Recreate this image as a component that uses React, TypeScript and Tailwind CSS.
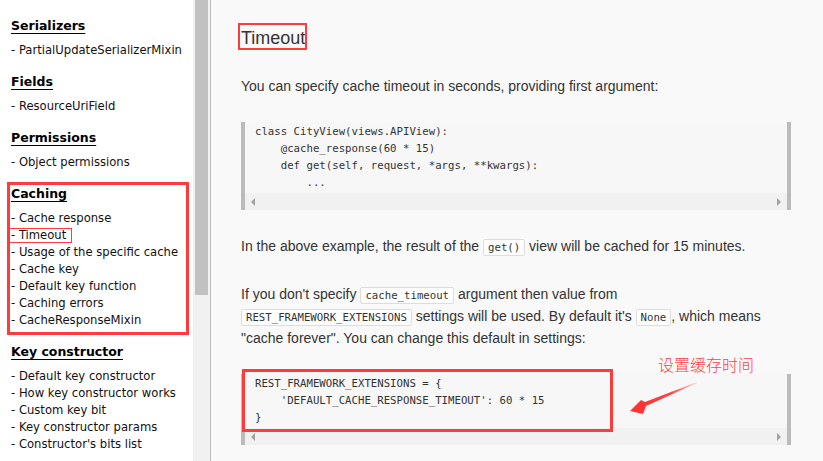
import React from 'react';

const sections: { title: string; items: string[] }[] = [
  { title: 'Serializers', items: ['PartialUpdateSerializerMixin'] },
  { title: 'Fields', items: ['ResourceUriField'] },
  { title: 'Permissions', items: ['Object permissions'] },
  {
    title: 'Caching',
    items: [
      'Cache response',
      'Timeout',
      'Usage of the specific cache',
      'Cache key',
      'Default key function',
      'Caching errors',
      'CacheResponseMixin',
    ],
  },
  {
    title: 'Key constructor',
    items: [
      'Default key constructor',
      'How key constructor works',
      'Custom key bit',
      'Key constructor params',
      "Constructor's bits list",
    ],
  },
];

const sideFont = { fontFamily: '"DejaVu Sans", Verdana, sans-serif' };
const bodyFont = { fontFamily: '"Liberation Sans", Arial, sans-serif' };
const monoFont = { fontFamily: '"DejaVu Sans Mono", "Liberation Mono", monospace' };

function Sidebar() {
  return (
    <div className="relative w-[193px] shrink-0 bg-white pt-[16px] pl-[11px] text-black" style={sideFont}>
      {sections.map((s) => (
        <div key={s.title} className="relative mb-[13px]">
          {s.title === 'Caching' && (
            <div className="pointer-events-none absolute -left-[4px] -top-[2px] h-[153px] w-[182px] border-[3px] border-[#ff3b3b]" />
          )}
          <div className="mb-[6px] h-[20px] text-[12.5px] font-bold leading-[20px] underline underline-offset-[3px]">
            {s.title}
          </div>
          {s.items.map((it) => (
            <div key={it} className="relative h-[17px] whitespace-nowrap text-[11.6px] leading-[17px] text-[#111]">
              {it === 'Timeout' && (
                <div className="pointer-events-none absolute -left-[3px] top-[1px] h-[15px] w-[64px] border border-[#ff3b3b]" />
              )}
              - {it}
            </div>
          ))}
        </div>
      ))}
    </div>
  );
}

function HScroll() {
  return (
    <div className="flex h-[17px] items-center justify-between bg-[#f1f1f1] px-[5px]">
      <svg width="6" height="8" viewBox="0 0 6 8">
        <path d="M5 0 L1 4 L5 8 Z" fill="#a3a3a3" />
      </svg>
      <svg width="6" height="8" viewBox="0 0 6 8">
        <path d="M1 0 L5 4 L1 8 Z" fill="#a3a3a3" />
      </svg>
    </div>
  );
}

function CodeBlock({ lines }: { lines: string[] }) {
  return (
    <div className="border-x-4 border-[#bbbbbb] bg-[#f7f7f7]">
      <pre className="pl-[10px] pt-[1px] pb-[2px] text-[10.7px] leading-[17px] text-[#333]" style={monoFont}>
        {lines.join('\n')}
      </pre>
      <HScroll />
    </div>
  );
}

function Code({ children }: { children: React.ReactNode }) {
  return (
    <code
      className="rounded-[2px] border border-[#dddddd] bg-white px-[4px] py-[1px] align-baseline text-[10.7px] leading-none text-[#333]"
      style={monoFont}
    >
      {children}
    </code>
  );
}

function Main() {
  return (
    <div className="relative flex-1 bg-[#f9f9f9] pl-[30px] pt-[26px] text-[#333]" style={bodyFont}>
      <div className="w-[550px]">
        <div className="relative inline-block text-[18px] leading-[24px]">
          <div className="pointer-events-none absolute -left-[3px] -top-[3px] h-[27px] w-[69px] border-2 border-[#ff3b3b]" />
          Timeout
        </div>
        <p className="mt-[24px] text-[14px] leading-[22px]">
          You can specify cache timeout in seconds, providing first argument:
        </p>
        <div className="mt-[25px]">
          <CodeBlock
            lines={[
              'class CityView(views.APIView):',
              '    @cache_response(60 * 15)',
              '    def get(self, request, *args, **kwargs):',
              '        ...',
            ]}
          />
        </div>
        <p className="mt-[25px] text-[14px] leading-[22px]">
          In the above example, the result of the <Code>get()</Code> view will be cached for 15 minutes.
        </p>
        <p className="mt-[26px] text-[14px] leading-[22px]">
          If you don't specify <Code>cache_timeout</Code> argument then value from
          <br />
          <Code>REST_FRAMEWORK_EXTENSIONS</Code> settings will be used. By default it's <Code>None</Code>, which means
          <br />
          "cache forever". You can change this default in settings:
        </p>
        <div className="relative mt-[25px]">
          <CodeBlock
            lines={[
              'REST_FRAMEWORK_EXTENSIONS = {',
              "    'DEFAULT_CACHE_RESPONSE_TIMEOUT': 60 * 15",
              '}',
            ]}
          />
          <div className="pointer-events-none absolute left-[1px] -top-[5px] h-[63px] w-[371px] border-[3px] border-[#ff3b3b]" />
        </div>
      </div>

      {/* annotation */}
      <div
        className="pointer-events-none absolute left-[447px] top-[353px] text-[16px] leading-[22px] text-[#ff4040]"
        style={{ fontFamily: '"Noto Sans CJK SC", sans-serif', fontWeight: 300 }}
      >
        设置缓存时间
      </div>
      <svg className="pointer-events-none absolute left-[0px] top-[0px]" width="612" height="461" viewBox="211 0 612 461">
        <defs>
          <linearGradient id="ag" x1="697" y1="382" x2="630" y2="411" gradientUnits="userSpaceOnUse">
            <stop offset="0" stopColor="#ff4040" stopOpacity="0.15" />
            <stop offset="0.4" stopColor="#ff4040" />
            <stop offset="1" stopColor="#ff3030" />
          </linearGradient>
        </defs>
        <polygon
          points="697,382 645,402 641,400 630,411 643,414 646,406 697,383"
          fill="url(#ag)"
        />
      </svg>
    </div>
  );
}

export default function App() {
  return (
    <div className="flex h-[461px] w-[823px] overflow-hidden">
      <Sidebar />
      {/* page scrollbar */}
      <div className="flex w-[17px] shrink-0 bg-[#f1f1f1]">
        <div className="ml-[2px] h-[295px] w-[13px] bg-[#c1c1c1]" />
      </div>
      <div className="w-[1px] shrink-0 bg-[#bdbdbd]" />
      <Main />
    </div>
  );
}
